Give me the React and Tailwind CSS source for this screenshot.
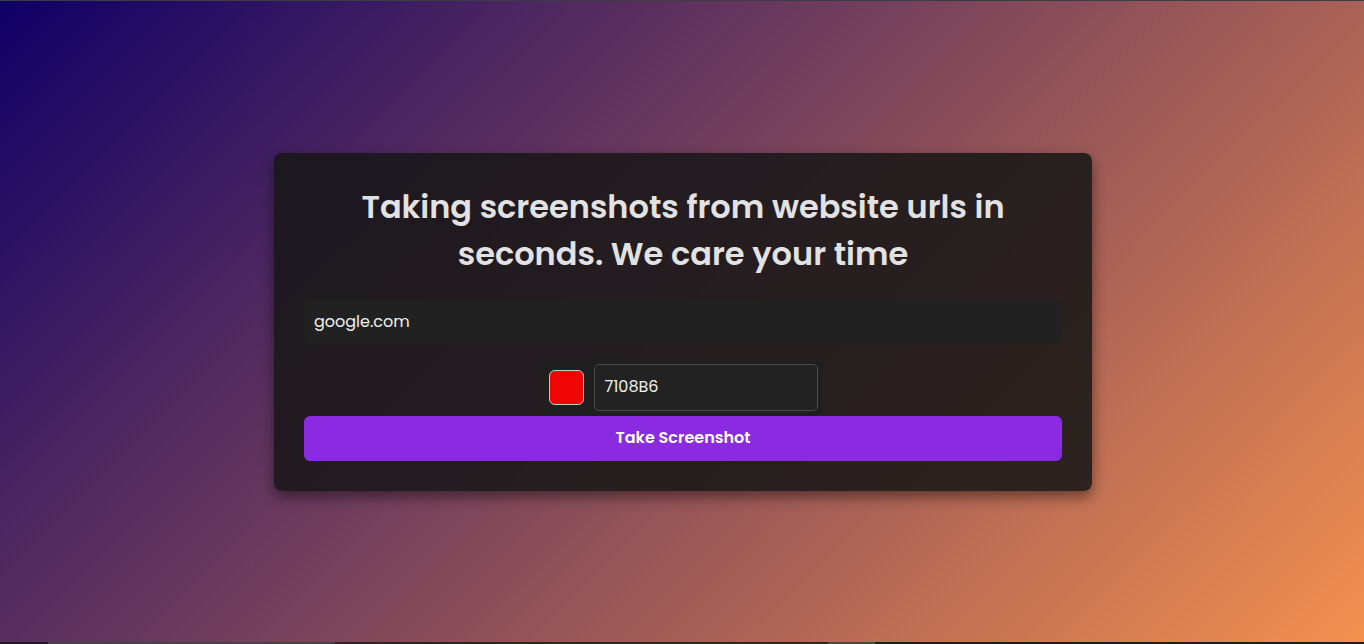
import React from "react";

const font = { fontFamily: "Poppins, Inter, 'Noto Sans', sans-serif" };

export default function App() {
  return (
    <div className="flex h-screen w-full flex-col overflow-hidden" style={font}>
      <div className="h-px w-full bg-[#3c3c44]" />
      <main className="flex flex-1 items-center justify-center bg-[linear-gradient(135deg,#0f0066,#f3904f)] pl-[2px]">
        <div className="w-[818px] rounded-lg bg-[rgba(23,23,23,0.87)] px-[30px] pt-[30px] pb-[30px] shadow-[0_6px_14px_rgba(0,0,0,0.45)]">
          <h1 className="text-center text-[32px] leading-[47px] font-semibold text-[#e2e2e2]">
            Taking screenshots from website urls in
            <br />
            seconds. We care your time
          </h1>

          <div className="mt-[23px] flex h-[44px] items-center rounded-md bg-[#212121] px-[10px] text-[16px] text-[#f0f0f0]">
            google.com
          </div>

          <div className="mt-[15px] flex justify-center">
            <div className="flex h-[57px] items-center gap-[10px] rounded-md bg-[#1f1f1f] px-[5px]">
              <div className="h-[35px] w-[35px] rounded-md border border-[#c8c8c8] bg-[#f00505]" />
              <div className="flex h-[47px] w-[224px] items-center rounded-[5px] border border-[#4a4a4a] bg-[#222222] px-[10px] text-[16px] text-[#f0f0f0]">
                7108B6
              </div>
            </div>
          </div>

          <button className="flex h-[45px] w-full items-center justify-center rounded-md bg-[#8a2be2] text-[16px] font-semibold text-white">
            Take Screenshot
          </button>
        </div>
      </main>
      <div className="flex h-[2px] w-full bg-[#1e1e1e]">
        <div className="w-[48px]" />
        <div className="w-[287px] bg-[#444444]" />
        <div className="w-[493px] bg-[#2a2820]" />
        <div className="w-[47px] bg-[#4a4a44]" />
      </div>
    </div>
  );
}
